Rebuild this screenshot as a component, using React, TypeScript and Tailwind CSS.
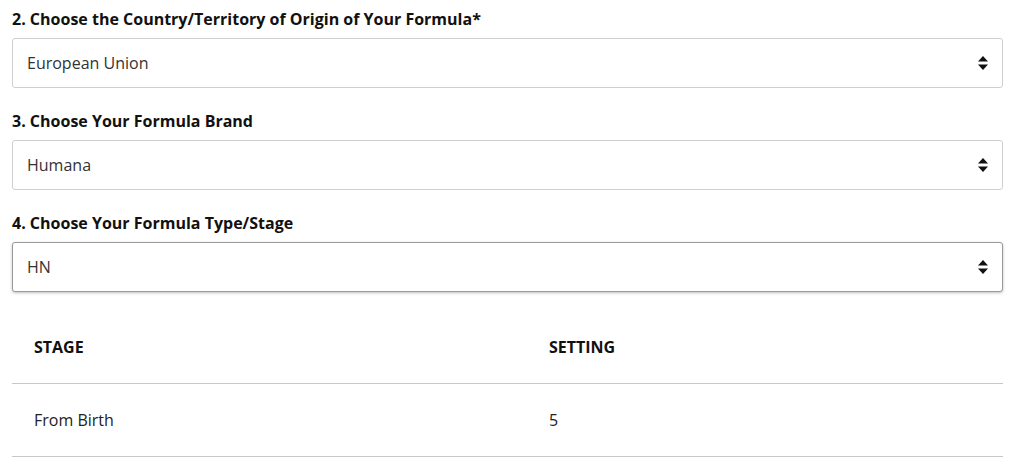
import React from "react";

function Arrows() {
  return (
    <svg width="10" height="14" viewBox="0 0 10 14" className="shrink-0">
      <path d="M5 0 L10 5.5 L0 5.5 Z" fill="#111" />
      <path d="M0 8.5 L10 8.5 L5 14 Z" fill="#111" />
    </svg>
  );
}

function Field({ label, value, focused }: { label: string; value: string; focused?: boolean }) {
  return (
    <div className="flex flex-col">
      <div className="h-[38px] flex items-center text-[16px] font-bold text-[#111] leading-none">{label}</div>
      <div
        className={
          "h-[50px] flex items-center justify-between border rounded-[3px] bg-white pl-[14px] pr-[14px] text-[16px] text-[#333] " +
          (focused ? "border-[#9a9a9a] shadow-[0_1px_3px_rgba(0,0,0,0.25)]" : "border-[#cfcfcf]")
        }
      >
        <span>{value}</span>
        <Arrows />
      </div>
      <div className="h-[14px]" />
    </div>
  );
}

export default function App() {
  return (
    <div className="w-[1020px] h-[474px] bg-white px-[12px] pr-[17px] pt-0" style={{ fontFamily: '"Open Sans", sans-serif' }}>
      <Field label="2. Choose the Country/Territory of Origin of Your Formula*" value="European Union" />
      <Field label="3. Choose Your Formula Brand" value="Humana" />
      <Field label="4. Choose Your Formula Type/Stage" value="HN" focused />
      <div className="mt-[5px]">
        <div className="grid grid-cols-[515px_1fr] h-[73px] items-center border-b border-[#c8c8c8] text-[16px] font-bold text-[#111] pl-[22px]">
          <span>STAGE</span>
          <span>SETTING</span>
        </div>
        <div className="grid grid-cols-[515px_1fr] h-[73px] items-center border-b border-[#c8c8c8] text-[16px] text-[#222] pl-[22px]">
          <span>From Birth</span>
          <span>5</span>
        </div>
      </div>
    </div>
  );
}
